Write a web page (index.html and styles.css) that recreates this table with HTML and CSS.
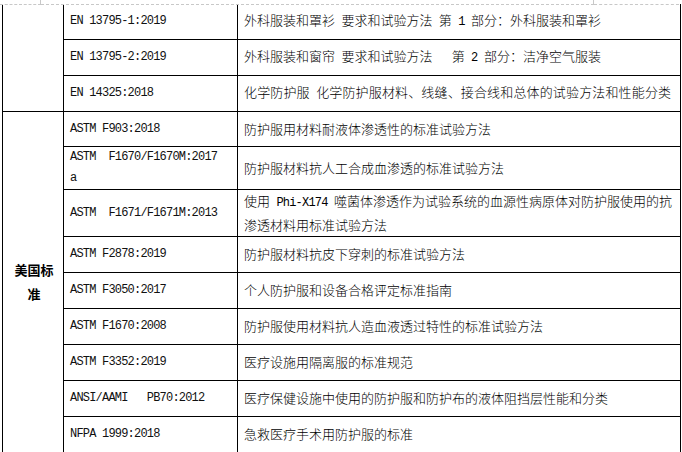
FILE: index.html
```html
<!DOCTYPE html>
<html lang="zh">
<head>
<meta charset="utf-8">
<title>防护服标准</title>
<link rel="stylesheet" href="styles.css">
</head>
<body>
<div class="guide"><div class="g g1"></div><div class="g g2"></div><div class="g g3"></div></div>
<table class="std">
  <colgroup><col class="c1"><col class="c2"><col class="c3"></colgroup>
  <tbody>
    <tr class="h35"><td class="region" rowspan="3"></td><td class="code">EN 13795-1:2019</td><td class="desc">外科服装和罩衫<span class="m"> </span>要求和试验方法<span class="m"> </span>第<span class="m"> 1 </span>部分：外科服装和罩衫</td></tr>
    <tr class="h36"><td class="code">EN 13795-2:2019</td><td class="desc">外科服装和窗帘<span class="m"> </span>要求和试验方法<span class="m">   </span>第<span class="m"> 2 </span>部分：洁净空气服装</td></tr>
    <tr class="h36"><td class="code">EN 14325:2018</td><td class="desc wide">化学防护服<span class="m"> </span>化学防护服材料、线缝、接合线和总体的试验方法和性能分类</td></tr>
    <tr class="h35"><td class="region us" rowspan="9">美国标<br>准</td><td class="code">ASTM F903:2018</td><td class="desc">防护服用材料耐液体渗透性的标准试验方法</td></tr>
    <tr class="h39"><td class="code two">ASTM  F1670/F1670M:2017<br>a</td><td class="desc">防护服材料抗人工合成血渗透的标准试验方法</td></tr>
    <tr class="h47"><td class="code">ASTM  F1671/F1671M:2013</td><td class="desc two">使用<span class="m"> Phi-X174 </span>噬菌体渗透作为试验系统的血源性病原体对防护服使用的抗<br>渗透材料用标准试验方法</td></tr>
    <tr class="h36"><td class="code">ASTM F2878:2019</td><td class="desc">防护服材料抗皮下穿刺的标准试验方法</td></tr>
    <tr class="h36"><td class="code">ASTM F3050:2017</td><td class="desc">个人防护服和设备合格评定标准指南</td></tr>
    <tr class="h36"><td class="code">ASTM F1670:2008</td><td class="desc">防护服使用材料抗人造血液透过特性的标准试验方法</td></tr>
    <tr class="h36"><td class="code">ASTM F3352:2019</td><td class="desc">医疗设施用隔离服的标准规范</td></tr>
    <tr class="h36"><td class="code">ANSI/AAMI   PB70:2012</td><td class="desc">医疗保健设施中使用的防护服和防护布的液体阻挡层性能和分类</td></tr>
    <tr class="h36"><td class="code">NFPA 1999:2018</td><td class="desc">急救医疗手术用防护服的标准</td></tr>
    <tr class="h36"><td class="region"></td><td class="code"></td><td class="desc"></td></tr>
  </tbody>
</table>
</body>
</html>
```
FILE: styles.css
```css
html, body {
  margin: 0;
  padding: 0;
  background: #ffffff;
}
body {
  width: 682px;
  height: 452px;
  overflow: hidden;
  font-family: "Noto Sans CJK SC", sans-serif;
  color: #000;
}
.guide {
  display: flex;
  width: 679px;
  height: 4px;
}
.g {
  height: 4px;
  border-bottom: 1px dashed #c8c8c8;
}
.g1 {
  width: 40px;
  border-right: 1px dashed #c8c8c8;
}
.g2 {
  width: 552px;
  border-right: 1px dashed #c8c8c8;
}
.g3 {
  flex: 1;
}
.std {
  border-collapse: collapse;
  table-layout: fixed;
  width: 678px;
  margin-left: 2px;
}
.c1 { width: 61px; }
.c2 { width: 174px; }
.c3 { width: 443px; }
.std td {
  border: 1px solid #000;
  padding: 0 4px 0 6px;
  vertical-align: middle;
  white-space: pre;
  overflow: hidden;
}
.std tr:first-child td {
  border-top: none;
}
.h35 { height: 35px; }
.h36 { height: 36px; }
.h39 { height: 39px; }
.h47 { height: 47px; }
.code {
  font-family: "Liberation Mono", "DejaVu Sans Mono", monospace;
  font-size: 12px;
  letter-spacing: -0.8px;
  line-height: 22px;
  color: #111;
}
.desc {
  font-size: 13px;
  font-weight: 300;
  line-height: 22px;
}
.wide {
  letter-spacing: 0.15px;
}
.m {
  font-family: "Liberation Mono", "DejaVu Sans Mono", monospace;
  font-size: 12px;
  letter-spacing: -0.8px;
}
.region {
  text-align: center;
  padding: 0;
}
.us {
  font-size: 13px;
  font-weight: 700;
  line-height: 24px;
  padding-top: 6px;
}
.two {
  line-height: 21px;
}
```
